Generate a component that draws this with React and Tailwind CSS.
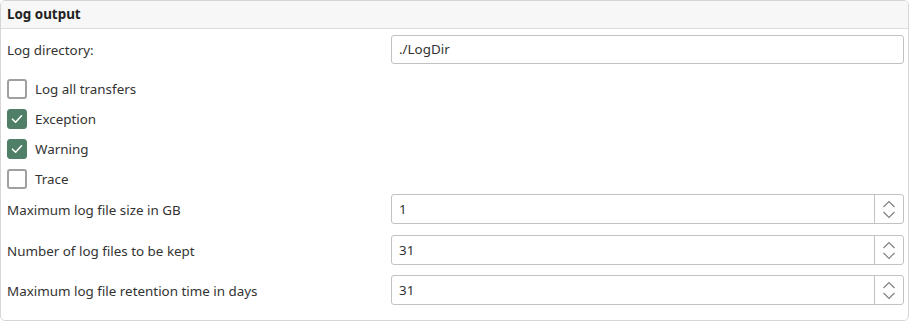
import { useState } from "react";

function Check({ label, checked, onToggle }) {
  return (
    <div className="h-[30px] flex items-center">
      <button
        onClick={onToggle}
        className={
          "w-[20px] h-[20px] rounded-[3px] flex items-center justify-center " +
          (checked ? "bg-[#4f7f67] border border-[#4f7f67]" : "bg-white border-2 border-[#a0a0a0]")
        }
      >
        {checked && (
          <svg width="14" height="14" viewBox="0 0 14 14" fill="none">
            <path d="M2.5 7.2 L5.6 10.2 L11.5 3.8" stroke="white" strokeWidth="1.6" strokeLinecap="round" strokeLinejoin="round" />
          </svg>
        )}
      </button>
      <span className="ml-[8px] pt-[1px]">{label}</span>
    </div>
  );
}

function Spin({ value }) {
  return (
    <div className="w-[513px] h-[30px] border border-[#c2c2c2] rounded-[3px] flex bg-white">
      <div className="flex-1 flex items-center pl-[7px] pt-[1px]">{value}</div>
      <div className="w-[29px] border-l border-[#c2c2c2] flex flex-col items-center justify-center gap-[3px]">
        <svg width="14" height="8" viewBox="0 0 14 8" fill="none">
          <path d="M1.5 7 L7 1.5 L12.5 7" stroke="#808080" strokeWidth="1.2" />
        </svg>
        <svg width="14" height="8" viewBox="0 0 14 8" fill="none">
          <path d="M1.5 1 L7 6.5 L12.5 1" stroke="#808080" strokeWidth="1.2" />
        </svg>
      </div>
    </div>
  );
}

export default function App() {
  const [checks, setChecks] = useState({ all: false, exception: true, warning: true, trace: false });
  const toggle = (k) => setChecks({ ...checks, [k]: !checks[k] });

  return (
    <div className="w-[909px] h-[321px] border border-[#d6d6d6] rounded-[5px] bg-white text-[13.4px] text-[#333] font-['Noto_Sans',sans-serif] overflow-hidden">
      <div className="h-[28px] bg-[#f7f7f7] border-b border-[#dcdcdc] flex items-center px-[6px] font-bold text-[#222]">
        Log output
      </div>
      <div className="pl-[6px] pr-[4px] pt-[5px] flex flex-col">
        <div className="h-[30px] flex items-center justify-between">
          <span className="pt-[3px]">Log directory:</span>
          <input
            className="w-[513px] h-[29px] border border-[#c2c2c2] rounded-[3px] px-[7px] outline-none"
            defaultValue="./LogDir"
          />
        </div>
        <div className="mt-[10px]">
          <Check label="Log all transfers" checked={checks.all} onToggle={() => toggle("all")} />
          <Check label="Exception" checked={checks.exception} onToggle={() => toggle("exception")} />
          <Check label="Warning" checked={checks.warning} onToggle={() => toggle("warning")} />
          <Check label="Trace" checked={checks.trace} onToggle={() => toggle("trace")} />
        </div>
        <div className="h-[30px] flex items-center justify-between">
          <span className="pt-[2px]">Maximum log file size in GB</span>
          <Spin value="1" />
        </div>
        <div className="mt-[11px] h-[30px] flex items-center justify-between">
          <span className="pt-[2px]">Number of log files to be kept</span>
          <Spin value="31" />
        </div>
        <div className="mt-[10px] h-[30px] flex items-center justify-between">
          <span className="pt-[2px]">Maximum log file retention time in days</span>
          <Spin value="31" />
        </div>
      </div>
    </div>
  );
}
